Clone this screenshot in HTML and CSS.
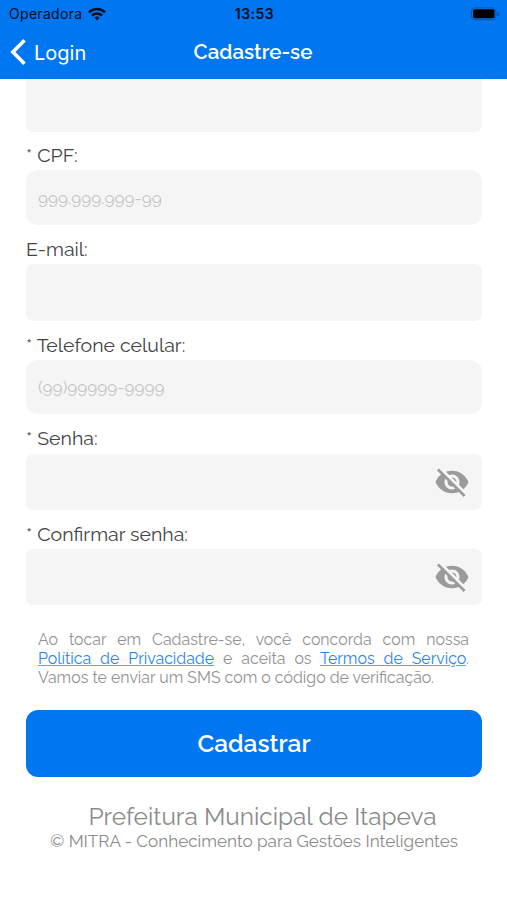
FILE: index.html
```html
<!DOCTYPE html>
<html lang="pt-BR">
<head>
    <meta charset="UTF-8">
    <meta name="viewport" content="width=device-width, initial-scale=1.0">
    <title>Cadastre-se</title>
    <link rel="stylesheet" href="styles.css">
</head>
<body>
    <header class="header">
        <div class="status-bar">
            <div class="carrier">
                <span>Operadora</span>
                <svg class="wifi" viewBox="0 0 18 14" fill="none" stroke="#06101f" stroke-width="2.5">
                    <path d="M1 5.3a11.4 11.4 0 0 1 16 0"/>
                    <path d="M4 8.6a7.1 7.1 0 0 1 10 0"/>
                    <path d="M6.6 10.8a3.4 3.4 0 0 1 4.8 0L9 13.4z" fill="#06101f" stroke="none"/>
                </svg>
            </div>
            <span class="clock">13:53</span>
            <svg class="battery" viewBox="0 0 29 14">
                <rect x="0.5" y="0.8" width="24.5" height="12" rx="3.5" fill="none" stroke="#0054b2"/>
                <rect x="2" y="2.3" width="21.5" height="9" rx="2" fill="#000"/>
                <path d="M26.5 5v4q1.8-.6 1.8-2t-1.8-2z" fill="#0054b2"/>
            </svg>
        </div>
        <nav class="nav-bar">
            <a href="#" class="back-link">
                <svg class="chevron" viewBox="0 0 16 26" fill="none" stroke="#fff" stroke-width="3.6">
                    <path d="M14.5 1.3L2.9 13l11.6 11.7"/>
                </svg>
                <span>Login</span>
            </a>
            <h1>Cadastre-se</h1>
        </nav>
    </header>

    <form class="form">
        <input type="text" class="form-control form-control-cut" aria-label="Nome">

        <label for="cpf" class="label-cpf">* CPF:</label>
        <input type="text" id="cpf" class="form-control masked" placeholder="999.999.999-99">

        <label for="email">E-mail:</label>
        <input type="email" id="email" class="form-control">

        <label for="phone">* Telefone celular:</label>
        <input type="text" id="phone" class="form-control masked masked-phone" placeholder="(99)99999-9999">

        <label for="password" class="label-password">* Senha:</label>
        <div class="form-control password">
            <input type="password" id="password">
            <svg class="eye" viewBox="0 0 24 24" fill="#9b9b9b"><path d="M12 7c2.76 0 5 2.24 5 5 0 .65-.13 1.26-.36 1.83l2.92 2.92c1.51-1.26 2.7-2.89 3.43-4.75-1.73-4.39-6-7.5-11-7.5-1.4 0-2.74.25-3.98.7l2.16 2.16C10.74 7.13 11.35 7 12 7zM2 4.27l2.28 2.28.46.46C3.08 8.3 1.78 10.02 1 12c1.73 4.39 6 7.5 11 7.5 1.55 0 3.03-.3 4.38-.84l.42.42L19.73 22 21 20.73 3.27 3 2 4.27zM7.53 9.8l1.55 1.55c-.05.21-.08.43-.08.65 0 1.66 1.34 3 3 3 .22 0 .44-.03.65-.08l1.55 1.55c-.67.33-1.41.53-2.2.53-2.76 0-5-2.24-5-5 0-.79.2-1.53.53-2.2zm4.31-.78l3.15 3.15.02-.16c0-1.66-1.34-3-3-3l-.17.01z"/></svg>
        </div>

        <label for="confirm">* Confirmar senha:</label>
        <div class="form-control password">
            <input type="password" id="confirm">
            <svg class="eye" viewBox="0 0 24 24" fill="#9b9b9b"><path d="M12 7c2.76 0 5 2.24 5 5 0 .65-.13 1.26-.36 1.83l2.92 2.92c1.51-1.26 2.7-2.89 3.43-4.75-1.73-4.39-6-7.5-11-7.5-1.4 0-2.74.25-3.98.7l2.16 2.16C10.74 7.13 11.35 7 12 7zM2 4.27l2.28 2.28.46.46C3.08 8.3 1.78 10.02 1 12c1.73 4.39 6 7.5 11 7.5 1.55 0 3.03-.3 4.38-.84l.42.42L19.73 22 21 20.73 3.27 3 2 4.27zM7.53 9.8l1.55 1.55c-.05.21-.08.43-.08.65 0 1.66 1.34 3 3 3 .22 0 .44-.03.65-.08l1.55 1.55c-.67.33-1.41.53-2.2.53-2.76 0-5-2.24-5-5 0-.79.2-1.53.53-2.2zm4.31-.78l3.15 3.15.02-.16c0-1.66-1.34-3-3-3l-.17.01z"/></svg>
        </div>

        <p class="terms">Ao tocar em Cadastre-se, você concorda com nossa <a href="#">Política de Privacidade</a> e aceita os <a href="#">Termos de Serviço</a>. Vamos te enviar um SMS com o código de verificação.</p>

        <button type="button" class="btn">Cadastrar</button>
    </form>

    <footer class="footer">
        <p class="city">Prefeitura Municipal de Itapeva</p>
        <p class="company">© MITRA - Conhecimento para Gestões Inteligentes</p>
    </footer>
</body>
</html>
```
FILE: styles.css
```css
* {
    box-sizing: border-box;
}

body {
    margin: 0;
    height: 900px;
    overflow: hidden;
    background-color: #fff;
    color: #444;
    font-family: Raleway, Lato, sans-serif;
}

.header {
    height: 79px;
    background-color: #0076f0;
}

.status-bar {
    display: grid;
    grid-template-columns: 1fr auto 1fr;
    align-items: center;
    height: 27px;
    padding: 0 7px 0 9px;
    color: #06101f;
    font-family: Inter, sans-serif;
    font-size: 14px;
}

.carrier {
    display: flex;
    align-items: center;
    gap: 6px;
    letter-spacing: 0.3px;
}

.wifi {
    width: 18px;
    height: 14px;
}

.clock {
    font-weight: 600;
    letter-spacing: 0.5px;
}

.battery {
    justify-self: end;
    width: 29px;
    height: 14px;
}

.nav-bar {
    display: grid;
    grid-template-columns: 1fr auto 1fr;
    align-items: center;
    height: 50px;
    padding: 0 11px 0 10px;
}

.nav-bar h1 {
    margin: 0;
    color: #fff;
    font-size: 20.6px;
    font-weight: 600;
}

.back-link {
    display: flex;
    align-items: center;
    gap: 8px;
    color: #fff;
    font-family: Inter, sans-serif;
    font-size: 20px;
    text-decoration: none;
}

.back-link span {
    padding-top: 2px;
}

.chevron {
    width: 16px;
    height: 26px;
}

.form {
    display: flex;
    flex-direction: column;
    padding: 0 25px 0 26px;
}

label {
    height: 39px;
    padding-top: 5px;
    font-size: 19.5px;
    line-height: 40px;
}

.label-cpf {
    height: 38px;
    padding-top: 4px;
}

.label-password {
    height: 40px;
}

.form-control {
    width: 100%;
    height: 56px;
    border: none;
    border-radius: 7px;
    background-color: #f5f5f5;
}

#email {
    height: 57px;
}

.form-control-cut {
    height: 53px;
    border-radius: 0 0 7px 7px;
}

.masked {
    height: 55px;
    padding: 0 12px;
    border-radius: 12px;
    font-family: inherit;
    font-size: 17.1px;
}

.masked-phone {
    height: 54px;
}

.masked::placeholder {
    color: #c4c4c4;
}

.password {
    display: flex;
    align-items: center;
    padding: 0 12px;
}

.password input {
    flex: 1;
    border: none;
    background: none;
}

.eye {
    width: 36px;
    height: 36px;
}

.terms {
    margin: 25px 13px 23px 12px;
    color: #929292;
    font-size: 15.9px;
    line-height: 19px;
    text-align: justify;
}

.terms a {
    color: #2a85f0;
    text-decoration-color: #5ba3f5;
}

.btn {
    height: 67px;
    border: none;
    border-radius: 12px;
    background-color: #0076f0;
    color: #fff;
    font-family: inherit;
    font-size: 24.5px;
    font-weight: 600;
}

.footer {
    padding-top: 25px;
    color: #8b8b8b;
    text-align: center;
}

.footer p {
    margin: 0;
}

.city {
    padding-left: 18px;
    font-size: 24.4px;
    line-height: 30px;
}

.company {
    padding-left: 1px;
    font-size: 17.1px;
    line-height: 19px;
}
```
